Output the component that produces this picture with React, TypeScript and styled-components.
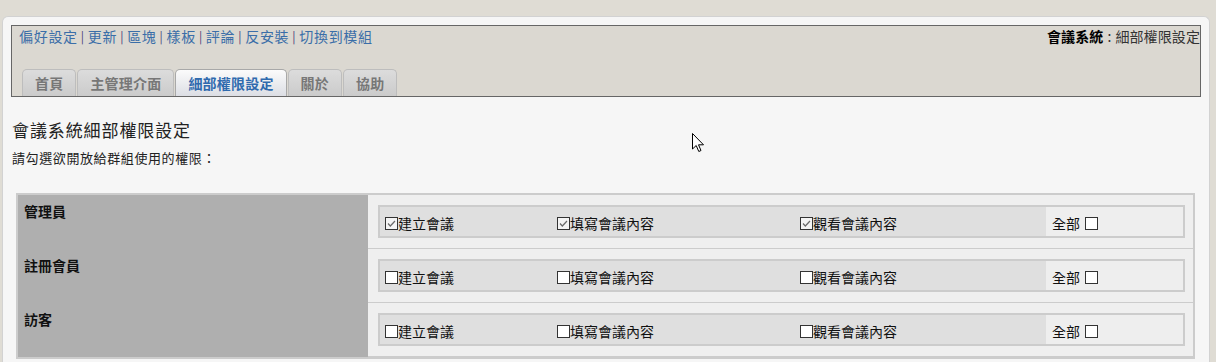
import React from 'react';
import styled, {createGlobalStyle} from 'styled-components';

const GlobalStyle = createGlobalStyle`
    body {
        margin: 0;
        background: #dfdcd4;
        font-family: "Noto Sans CJK TC", "Noto Sans", sans-serif;
        color: #111;
    }
`;

interface Perm {
    label: string;
    checked: boolean;
}

interface Group {
    name: string;
    perms: Perm[];
}

const groups: Group[] = [
    {
        name: '管理員',
        perms: [
            {label: '建立會議', checked: true},
            {label: '填寫會議內容', checked: true},
            {label: '觀看會議內容', checked: true},
        ],
    },
    {
        name: '註冊會員',
        perms: [
            {label: '建立會議', checked: false},
            {label: '填寫會議內容', checked: false},
            {label: '觀看會議內容', checked: false},
        ],
    },
    {
        name: '訪客',
        perms: [
            {label: '建立會議', checked: false},
            {label: '填寫會議內容', checked: false},
            {label: '觀看會議內容', checked: false},
        ],
    },
];

const links = ['偏好設定', '更新', '區塊', '樣板', '評論', '反安裝', '切換到模組'];
const tabs = ['首頁', '主管理介面', '細部權限設定', '關於', '協助'];

const CheckBox: React.FC<{checked: boolean}> = ({checked}) => (
    <Box $checked={checked}>
        {checked && (
            <svg width="11" height="11" viewBox="0 0 11 11">
                <path d="M2 5.5 L4.3 8 L9 3" fill="none" stroke="#6a6a6a" strokeWidth="1.2"/>
            </svg>
        )}
    </Box>
);

const App: React.FC = () => {
    return (
        <Page>
            <GlobalStyle/>
            <Panel>
                <Header>
                    <TopLine>
                        <Links>
                            {links.map((l, i) => (
                                <React.Fragment key={l}>
                                    {i > 0 && <Sep>|</Sep>}
                                    <LinkText>{l}</LinkText>
                                </React.Fragment>
                            ))}
                        </Links>
                        <Crumb>
                            <b>會議系統</b>
                            <CrumbSep>:</CrumbSep>細部權限設定
                        </Crumb>
                    </TopLine>
                    <TabBar>
                        {tabs.map(t => (
                            <Tab key={t} $active={t === '細部權限設定'}>{t}</Tab>
                        ))}
                    </TabBar>
                </Header>

                <Title>會議系統細部權限設定</Title>
                <Subtitle>請勾選欲開放給群組使用的權限：</Subtitle>

                <PermTable>
                    {groups.map(g => (
                        <React.Fragment key={g.name}>
                            <GroupName>{g.name}</GroupName>
                            <PermCell>
                                <PermBox>
                                    {g.perms.map(p => (
                                        <PermItem key={p.label}>
                                            <CheckBox checked={p.checked}/>
                                            {p.label}
                                        </PermItem>
                                    ))}
                                    <AllItem>
                                        全部
                                        <CheckBox checked={false}/>
                                    </AllItem>
                                </PermBox>
                            </PermCell>
                        </React.Fragment>
                    ))}
                </PermTable>

                <Cursor width="13" height="20" viewBox="0 0 13 20">
                    <path d="M0.5 0.5 L0.5 16 L4.2 12.5 L6.8 18.5 L9 17.5 L6.5 11.8 L11.5 11.8 Z"
                          fill="#fff" stroke="#000" strokeWidth="1"/>
                </Cursor>
            </Panel>
        </Page>
    );
};

export default App;

const Page = styled.div`
    padding: 16px 6px 0 2px;
    height: 362px;
    box-sizing: border-box;
    overflow: hidden;
`;

const Panel = styled.div`
    position: relative;
    background: #f6f6f6;
    border: 1px solid #d2d2d2;
    border-bottom: none;
    border-radius: 6px 6px 0 0;
    padding: 8px 8px 0 8px;
    min-height: 400px;
`;

const Header = styled.div`
    display: flex;
    flex-direction: column;
    height: 70px;
    border: 1px solid #666;
    background: #dbd8d1;
`;

const TopLine = styled.div`
    display: flex;
    justify-content: space-between;
    padding: 1px 0 0 7px;
    font-size: 14px;
    line-height: 18px;
`;

const Links = styled.div`
    display: flex;
    align-items: center;
    letter-spacing: 0.7px;
`;

const LinkText = styled.span`
    color: #3a6ea8;
`;

const Sep = styled.span`
    color: #4a3f78;
    font-size: 12px;
    margin: 0 3px;
`;

const Crumb = styled.div`
    color: #333;
    letter-spacing: 0.1px;

    b {
        color: #000;
        font-weight: 700;
    }
`;

const CrumbSep = styled.span`
    margin: 0 4px;
`;

const TabBar = styled.div`
    display: flex;
    gap: 1px;
    margin-top: auto;
    padding-left: 10px;
`;

const Tab = styled.div<{$active: boolean}>`
    height: 27px;
    padding: 0 12px;
    box-sizing: border-box;
    display: flex;
    align-items: center;
    border: 1px solid ${p => (p.$active ? '#a8a8a8' : '#bdbdbd')};
    border-bottom: none;
    border-radius: 5px 5px 0 0;
    font-size: 14px;
    font-weight: 700;
    letter-spacing: 0.2px;
    color: ${p => (p.$active ? '#2f6aae' : '#777')};
    background: ${p => (p.$active
        ? 'linear-gradient(#fbfbfb, #dcdee4)'
        : 'linear-gradient(#dcdcdc, #cbcbcb)')};
`;

const Title = styled.h1`
    margin: 22px 0 0 1px;
    font-size: 17px;
    font-weight: 400;
    line-height: 22px;
    letter-spacing: 0.9px;
    color: #222;
`;

const Subtitle = styled.p`
    margin: 8px 0 0 1px;
    font-size: 13px;
    line-height: 18px;
    letter-spacing: 0.6px;
    color: #222;
`;

const PermTable = styled.div`
    display: grid;
    grid-template-columns: 350px 1fr;
    margin: 26px 0 0 5px;
    width: 1179px;
    box-sizing: border-box;
    border: 2px solid #cccccc;
`;

const GroupName = styled.div`
    background: #afafaf;
    padding: 6px 6px;
    font-size: 14px;
    font-weight: 700;
    line-height: 20px;
    color: #111;
`;

const PermCell = styled.div`
    background: #efefef;
    padding: 10px 8px 10px 10px;
    border-bottom: 1px solid #cccccc;
`;

const PermBox = styled.div`
    display: grid;
    grid-template-columns: 172px 243px 251px 1fr;
    height: 33px;
    box-sizing: border-box;
    border: 2px solid #cccccc;
    background: #dfdfdf;
`;

const PermItem = styled.div`
    display: flex;
    align-items: center;
    padding: 2px 0 0 5px;
    font-size: 14px;
    color: #111;
`;

const AllItem = styled.div`
    display: flex;
    align-items: center;
    gap: 5px;
    padding: 2px 0 0 6px;
    background: #eeeeee;
    font-size: 14px;
    color: #111;
`;

const Box = styled.span<{$checked: boolean}>`
    display: inline-flex;
    align-items: center;
    justify-content: center;
    width: 13px;
    height: 13px;
    box-sizing: border-box;
    border: 1px solid #333;
    background: ${p => (p.$checked ? '#f4f4f4' : '#fff')};
    margin-top: 2px;
`;

const Cursor = styled.svg`
    position: absolute;
    left: 689px;
    top: 116px;
`;
